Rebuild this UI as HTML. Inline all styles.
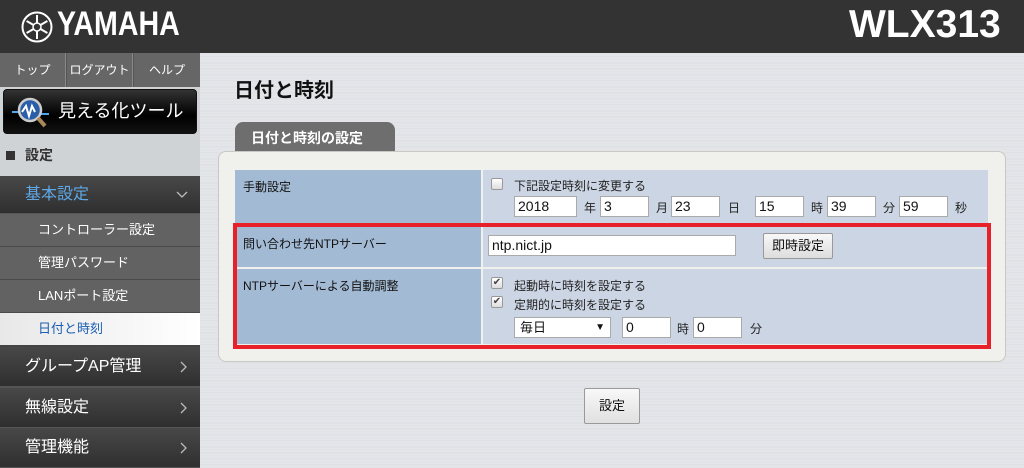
<!DOCTYPE html>
<html><head><meta charset="utf-8"><style>
*{margin:0;padding:0;box-sizing:border-box}
body{width:1024px;height:468px;overflow:hidden;position:relative;font-family:"Liberation Sans","Noto Sans CJK JP",sans-serif;background:repeating-linear-gradient(180deg,#e3e5e8 0,#e3e5e8 2px,#dadde1 3px,#e6e8eb 4px,#dfe1e4 6px);}
.a{position:absolute}
.hdr{left:0;top:0;width:1024px;height:53px;background:#333}
.side{left:0;top:53px;width:200px;height:415px;background:#555}
.nav{top:53px;height:34px;background:#666;color:#fff;font-size:12px;line-height:34px;text-align:center}
.sub{left:0;width:200px;height:33px;background:#626262;color:#fff;font-size:13px;line-height:32px;padding-left:38px;border-bottom:1px solid #4a4a4a}
.big{left:0;width:200px;height:40px;background:linear-gradient(#484848,#2f2f2f);color:#fff;font-size:16px;line-height:40px;padding-left:25px;border-bottom:1px solid #555}
.chev{position:absolute;right:12px;top:14px}
.lab{background:#a3bad4;font-size:12px;color:#111;padding:8px 0 0 8px}
.val{background:#ccd5e3;font-size:12px;color:#111}
.in{position:absolute;height:21px;background:#fff;border:1px solid #aaa;font-size:14px;line-height:19px;padding-left:3px;color:#111}
.t{position:absolute;font-size:12px;color:#222}
.cb{position:absolute;width:12px;height:12px;border:1px solid #999;border-radius:2px;background:linear-gradient(#fff,#ddd);font-size:10px;line-height:10px;text-align:center;color:#444}
</style></head><body>
<div class="a hdr"></div>
<svg class="a" style="left:21px;top:11px" width="32" height="32" viewBox="0 0 32 32"><circle cx="16" cy="16" r="14.5" fill="none" stroke="#fff" stroke-width="2"/><g stroke="#fff" stroke-width="2"><line x1="16" y1="4" x2="16" y2="28"/><line x1="5.6" y1="10" x2="26.4" y2="22"/><line x1="5.6" y1="22" x2="26.4" y2="10"/></g><circle cx="16" cy="16" r="4" fill="#333" stroke="#fff" stroke-width="1.5"/></svg>
<div class="a" style="left:57px;top:5px;color:#fff;font-size:34px;font-weight:bold;transform:scaleX(0.84);transform-origin:left">YAMAHA</div>
<div class="a" style="left:849px;top:3px;color:#fff;font-size:39px;font-weight:bold">WLX313</div>
<div class="a side"></div>
<div class="a nav" style="left:0;width:66px;border-right:1px solid #888">トップ</div>
<div class="a nav" style="left:67px;width:66px;border-right:1px solid #888">ログアウト</div>
<div class="a nav" style="left:134px;width:66px">ヘルプ</div>
<div class="a" style="left:0;top:87px;width:200px;height:48px;background:#d0d3d6"></div>
<div class="a" style="left:3px;top:89px;width:194px;height:45px;background:linear-gradient(#333,#000 60%,#111);border:1px solid #111;border-radius:4px;color:#fff;font-size:18px;line-height:43px;padding-left:54px">見える化ツール</div>
<svg class="a" style="left:10px;top:92px" width="42" height="40" viewBox="0 0 42 40"><path d="M2 20h8l3-8 4 14 3-10 3 6h16" stroke="#4aa8f0" stroke-width="2" fill="none"/><circle cx="20" cy="18" r="11" fill="#2a5ea8" stroke="#ccc" stroke-width="2.5"/><path d="M12 20l4-6 3 10 3-10 3 6" stroke="#fff" stroke-width="2" fill="none"/><line x1="28" y1="26" x2="35" y2="34" stroke="#a9875a" stroke-width="4"/></svg>
<div class="a" style="left:0;top:135px;width:200px;height:41px;background:#d0d3d6;font-size:14px;font-weight:bold;color:#333;line-height:41px;padding-left:25px">設定</div>
<div class="a" style="left:6px;top:151px;width:9px;height:9px;background:#333"></div>
<div class="a big" style="top:176px;height:38px;line-height:38px;color:#5fa8e8">基本設定<svg class="chev" style="top:15px" width="12" height="8" viewBox="0 0 12 8"><path d="M1 1l5 5 5-5" stroke="#bbb" stroke-width="1.3" fill="none"/></svg></div>
<div class="a sub" style="top:214px">コントローラー設定</div>
<div class="a sub" style="top:247px">管理パスワード</div>
<div class="a sub" style="top:280px">LANポート設定</div>
<div class="a sub" style="top:313px;background:linear-gradient(90deg,#e8e8e8,#fff);color:#1a5fb4;border-bottom:2px solid #444;height:34px">日付と時刻</div>
<div class="a big" style="top:347px">グループAP管理<svg class="chev" width="8" height="12" viewBox="0 0 8 12"><path d="M1 1l5 5-5 5" stroke="#bbb" stroke-width="1.3" fill="none"/></svg></div>
<div class="a big" style="top:388px">無線設定<svg class="chev" width="8" height="12" viewBox="0 0 8 12"><path d="M1 1l5 5-5 5" stroke="#bbb" stroke-width="1.3" fill="none"/></svg></div>
<div class="a big" style="top:428px">管理機能<svg class="chev" width="8" height="12" viewBox="0 0 8 12"><path d="M1 1l5 5-5 5" stroke="#bbb" stroke-width="1.3" fill="none"/></svg></div>

<div class="a" style="left:234px;top:74px;font-size:20px;font-weight:bold;color:#111">日付と時刻</div>
<div class="a" style="left:235px;top:122px;width:160px;height:30px;background:#6e6e6e;border-radius:8px 8px 0 0;color:#fff;font-size:14px;font-weight:bold;padding:6px 0 0 16px">日付と時刻の設定</div>
<div class="a" style="left:218px;top:151px;width:788px;height:211px;background:#f0f0ec;border:1px solid #c8c8c4;border-radius:8px"></div>
<div class="a lab" style="left:235px;top:170px;width:246px;height:55px">手動設定</div>
<div class="a val" style="left:483px;top:170px;width:505px;height:55px"></div>
<div class="a lab" style="left:235px;top:227px;width:246px;height:40px">問い合わせ先NTPサーバー</div>
<div class="a val" style="left:483px;top:227px;width:505px;height:40px"></div>
<div class="a lab" style="left:235px;top:269px;width:246px;height:75px">NTPサーバーによる自動調整</div>
<div class="a val" style="left:483px;top:269px;width:505px;height:75px"></div>
<div class="a" style="left:233px;top:223px;width:758px;height:126px;border:4px solid #e8202a"></div>

<div class="cb" style="left:491px;top:178px"></div>
<div class="t" style="left:514px;top:177px">下記設定時刻に変更する</div>
<div class="in" style="left:514px;top:196px;width:63px">2018</div><div class="t" style="left:584px;top:199px">年</div>
<div class="in" style="left:600px;top:196px;width:49px">3</div><div class="t" style="left:656px;top:199px">月</div>
<div class="in" style="left:671px;top:196px;width:49px">23</div><div class="t" style="left:728px;top:199px">日</div>
<div class="in" style="left:755px;top:196px;width:49px">15</div><div class="t" style="left:811px;top:199px">時</div>
<div class="in" style="left:827px;top:196px;width:49px">39</div><div class="t" style="left:883px;top:199px">分</div>
<div class="in" style="left:899px;top:196px;width:49px">59</div><div class="t" style="left:955px;top:199px">秒</div>
<div class="in" style="left:488px;top:235px;width:248px">ntp.nict.jp</div>
<div class="a" style="left:763px;top:233px;width:70px;height:26px;border:1px solid #999;border-radius:2px;background:linear-gradient(#f8f8f8,#ddd);font-size:13px;text-align:center;line-height:24px;color:#111">即時設定</div>
<div class="cb" style="left:491px;top:277px">✔</div>
<div class="t" style="left:514px;top:277px">起動時に時刻を設定する</div>
<div class="cb" style="left:491px;top:296px">✔</div>
<div class="t" style="left:514px;top:296px">定期的に時刻を設定する</div>
<div class="in" style="left:514px;top:317px;width:97px;font-size:13px;padding-left:5px">毎日<span style="position:absolute;right:5px;font-size:10px">▼</span></div>
<div class="in" style="left:622px;top:317px;width:49px">0</div><div class="t" style="left:677px;top:320px">時</div>
<div class="in" style="left:693px;top:317px;width:49px">0</div><div class="t" style="left:750px;top:320px">分</div>

<div class="a" style="left:584px;top:388px;width:56px;height:36px;border:1px solid #999;border-radius:2px;background:linear-gradient(#f8f8f8,#e0e0e0);font-size:13px;text-align:center;line-height:34px;color:#111">設定</div>
</body></html>
